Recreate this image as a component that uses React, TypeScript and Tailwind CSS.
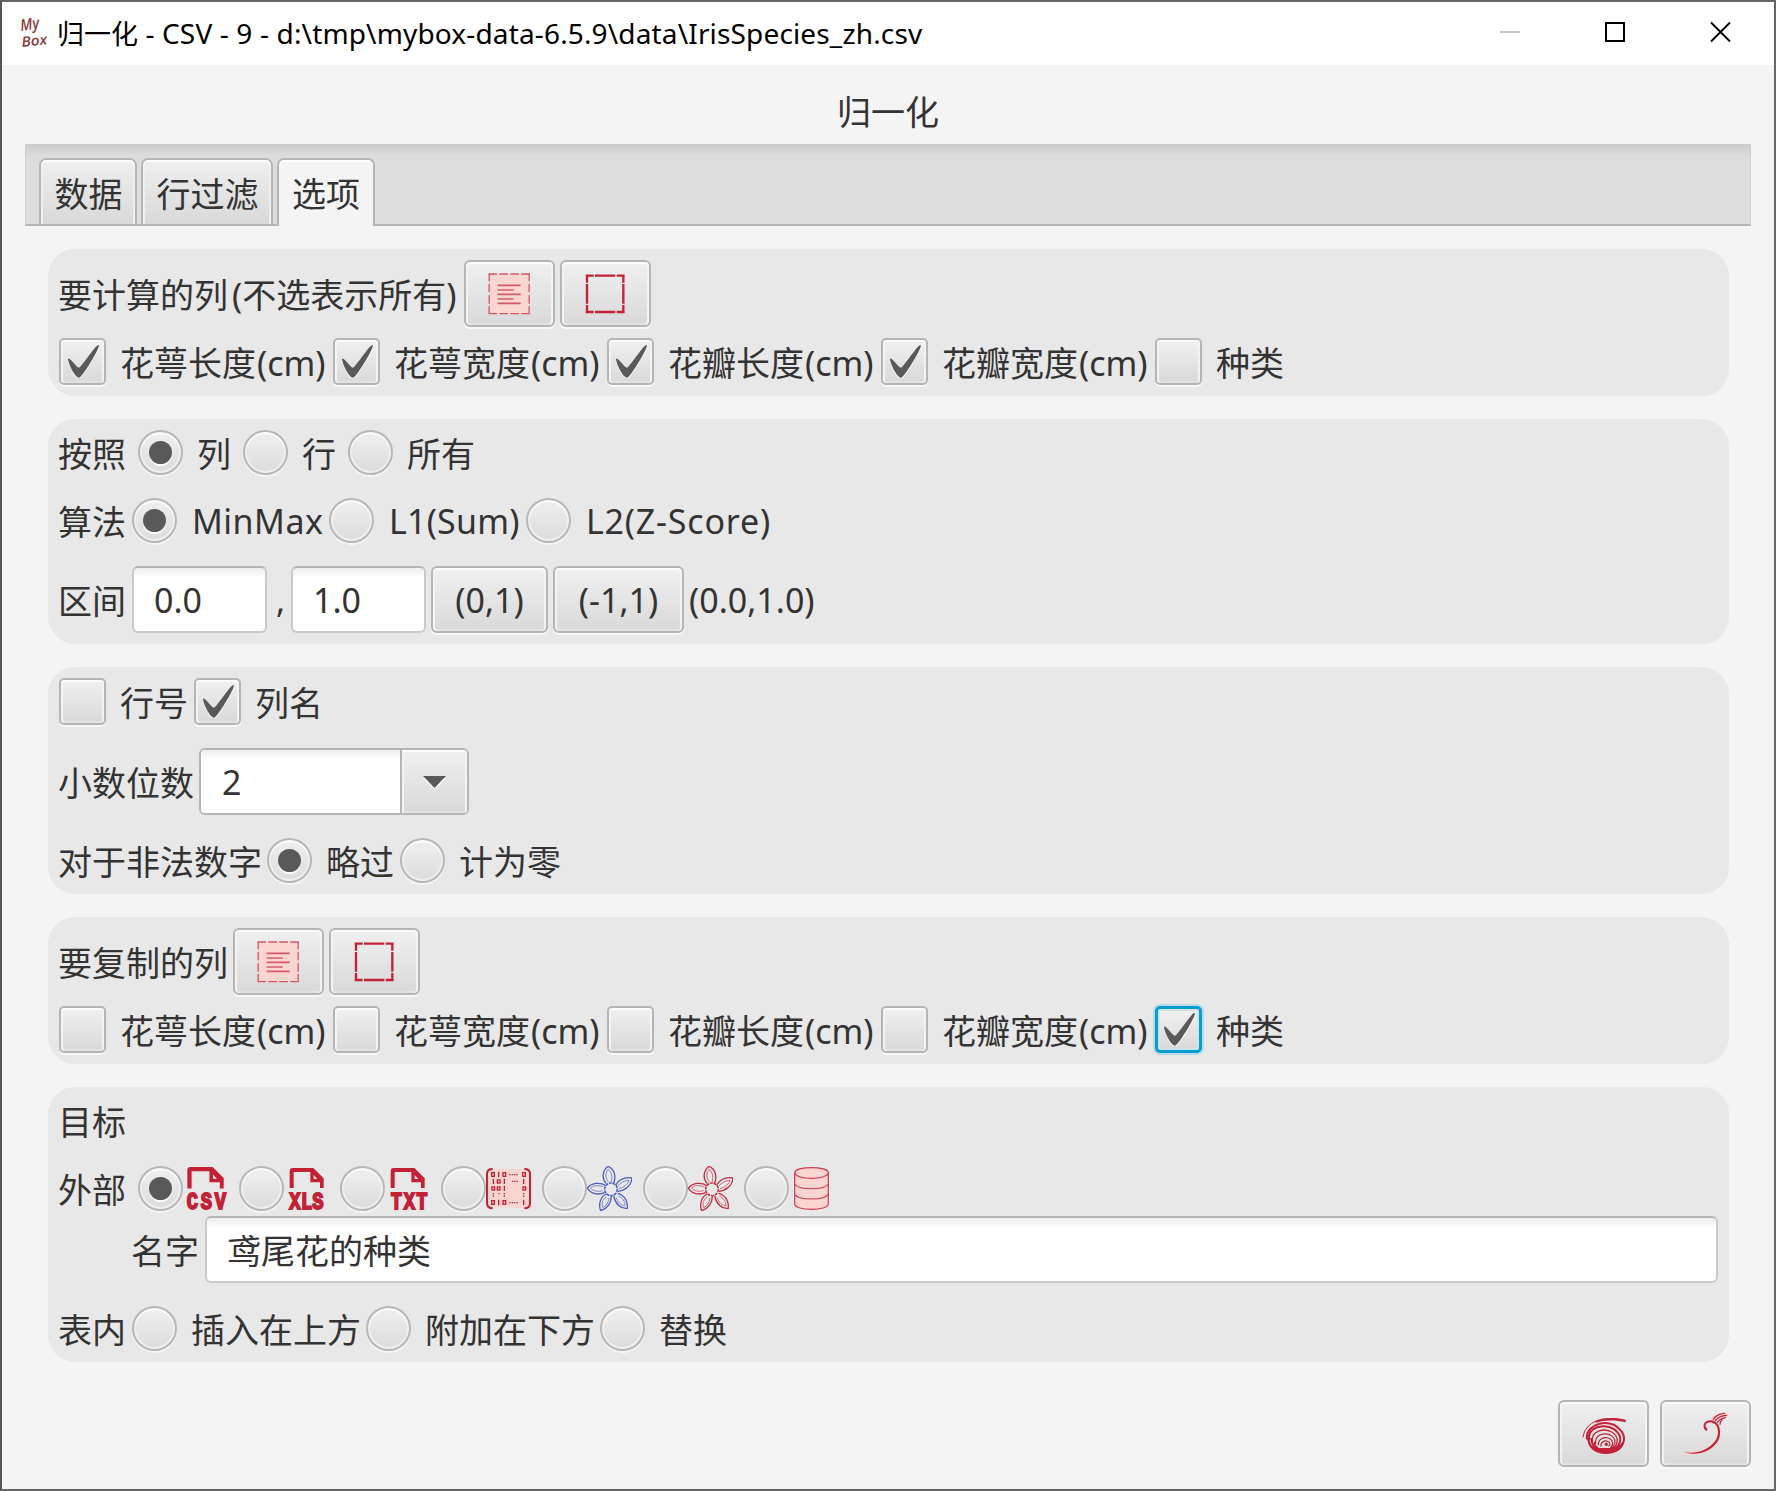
import React from "react";

const FACE =
  "relative shrink-0 border-2 border-[#b5b5b5] bg-linear-to-b from-[#f0f0f0] to-[#d9d9d9] shadow-[0_2px_0_#f8f8f8,inset_0_2px_0_#fcfcfc,inset_2px_0_0_#f3f3f3,inset_-2px_0_0_#f3f3f3,inset_0_-2px_0_#e1e1e1]";

function Mark() {
  return (
    <svg className="h-[33px] w-[31px] shrink-0" viewBox="-0.4 -1 16.5 17.3" preserveAspectRatio="none">
      <path
        fill="#fff"
        transform="translate(0 .7)"
        d="M-0.25,6.083c0.843-0.758,4.583,4.833,5.75,4.833S14.5-1.5,15.917-0.917c1.292,0.532-8.75,17.083-10.5,17.083C3,16.167-1.083,6.833-0.25,6.083z"
      />
      <path
        fill="#595959"
        d="M-0.25,6.083c0.843-0.758,4.583,4.833,5.75,4.833S14.5-1.5,15.917-0.917c1.292,0.532-8.75,17.083-10.5,17.083C3,16.167-1.083,6.833-0.25,6.083z"
      />
    </svg>
  );
}

const FOCUS =
  "relative shrink-0 border-[3px] border-[#039ed3] bg-linear-to-b from-[#f0f0f0] to-[#d9d9d9] shadow-[0_0_0_2px_#b9dbe6,inset_0_0_0_2px_#cfe3ea]";

function Check({ on, focus, w, children }: { on?: boolean; focus?: boolean; w: string; children: React.ReactNode }) {
  return (
    <label className="flex h-[47px] items-center">
      <span className={`${focus ? FOCUS : FACE} flex size-[47px] items-center justify-center rounded-[5px] pl-px`}>
        {on && <Mark />}
      </span>
      <span className={`ml-[14px] pt-[3px] whitespace-nowrap ${w}`}>{children}</span>
    </label>
  );
}

function Dot({ on }: { on?: boolean }) {
  return (
    <span
      className="flex size-[45px] shrink-0 items-center justify-center rounded-full border-2 border-[#b7b7b7] bg-linear-to-b from-[#f0f0f0] to-[#dbdbdb] shadow-[0_2px_0_#f6f6f6,inset_0_2px_1px_#fcfcfc,inset_0_0_0_2px_#efefef]"
    >
      {on && <span className="size-[23px] rounded-full bg-[#595959] shadow-[0_2px_0_#fafafa]" />}
    </span>
  );
}

function Radio({ on, w, children }: { on?: boolean; w: string; children: React.ReactNode }) {
  return (
    <label className="flex h-[45px] items-center">
      <Dot on={on} />
      <span className={`ml-[14px] whitespace-nowrap ${w}`}>{children}</span>
    </label>
  );
}

function Name({ w, children }: { w: string; children: React.ReactNode }) {
  return <span className={`-ml-px flex h-[45px] items-center pt-[3px] whitespace-nowrap ${w}`}>{children}</span>;
}

function Btn({ w, children }: { w: string; children: React.ReactNode }) {
  return <button className={`${FACE} flex h-[67px] items-center justify-center rounded-[6px] ${w}`}>{children}</button>;
}

function Field({ w, children }: { w: string; children: React.ReactNode }) {
  return (
    <div
      className={`flex h-[67px] items-center rounded-[6px] border-2 border-[#cacaca] border-t-[#b5b5b5] bg-white bg-linear-to-b from-[#eeeeee] to-white to-[10px] pl-[20px] whitespace-nowrap ${w}`}
    >
      {children}
    </div>
  );
}

function Panel({ className, children }: { className: string; children: React.ReactNode }) {
  return (
    <section className={`flex w-[1681px] flex-col items-start rounded-[27px] bg-[#e8e8e8] p-[11px] ${className}`}>
      {children}
    </section>
  );
}

const RED = "#c32136";
const PINK = "#fbd6d1";

function SelectAll() {
  return (
    <svg className="mr-px size-[44px]" viewBox="649 119 132 132" fill="none">
      <rect x="656" y="125" width="119" height="119" fill={PINK} />
      <g stroke="#d4576a" strokeWidth="4">
        <path d="M654 125h25M686 125h26M719 125h26M752 125h25M654 244h25M686 244h26M719 244h26M752 244h25" />
        <path d="M655.500 124v23M655.500 154v26M655.500 188v26M655.500 221v23M775.500 124v23M775.500 154v26M775.500 188v26M775.500 221v23" />
      </g>
      <path d="M681 159h69M681 186h69M681 213h69" stroke="#d4576a" strokeWidth="5" />
      <path d="M681 173h48M681 200h48" stroke={RED} strokeWidth="3.4" />
    </svg>
  );
}

function SelectNone() {
  return (
    <svg className="mr-px size-[44px]" viewBox="937 119 132 132" fill="none" stroke={RED}>
      <path
        d="M945 130h24M973 130h61M1038 130h24M945 239h24M973 239h61M1038 239h24M949 128v23M949 155v59M949 218v23M1058 128v23M1058 155v59M1058 218v23"
        strokeWidth="7"
      />
    </svg>
  );
}

function FileIcon({ label, at, big }: { label: string; at: number[]; big?: boolean }) {
  return (
    <svg className="size-[45px] shrink-0 overflow-visible" viewBox="0 0 135 135">
      <g transform={big ? "translate(13 3) scale(1.07 1.07)" : "translate(17 6)"}>
        <path
          fill={RED}
          fillRule="evenodd"
          d="M0 60V9Q0 0 9 0H71L102 31V60H91V43H62V12H12V60ZM72 21V33H83Z"
        />
      </g>
      <g transform="scale(.78 1)">
        <text
          x={at.map((v) => v / 0.78).join(" ")}
          y="128"
          fill={RED}
          stroke={RED}
          strokeWidth="5.500"
          fontFamily="Liberation Mono"
          fontWeight="700"
          fontSize="72"
        >
          {label}
        </text>
      </g>
    </svg>
  );
}

function MatrixIcon() {
  return (
    <svg className="size-[45px] shrink-0" viewBox="138 78 135 135" fill="none" stroke={RED}>
      <rect x="142" y="87" width="128" height="116" fill={PINK} stroke="none" />
      <path d="M158 87Q141 87 141 101V190Q141 205 158 205M253 87Q270 87 270 101V190Q270 205 253 205" strokeWidth="6" />
      <g strokeWidth="4">
        <rect x="155" y="98" width="8" height="11" />
        <path d="M176 95V112" />
        <rect x="189" y="98" width="8" height="11" />
        <rect x="248" y="98" width="8" height="11" />
        <path d="M160 116V132M193 116V132M251 116V132" />
        <rect x="172" y="120" width="8" height="9" />
        <rect x="156" y="141" width="8" height="9" />
        <rect x="172" y="141" width="8" height="9" />
        <path d="M193 137V153" />
        <rect x="249" y="141" width="8" height="9" />
        <rect x="155" y="182" width="8" height="11" />
        <path d="M176 179V196" />
        <rect x="189" y="182" width="8" height="11" />
        <path d="M251 179V196" />
        <path d="M208 104H233M216 124H236M208 188H233" strokeDasharray="4 3" />
        <path d="M160 159V170M193 159V170M251 159V170M177 159V163" strokeDasharray="4 3" />
      </g>
    </svg>
  );
}

function FlowerIcon({ color }: { color: string }) {
  const petals = [
    "M499 131C484 116 487 92 504 79C523 86 530 110 520 131",
    "M527 135C537 119 556 111 576 114C575 136 554 152 534 154",
    "M533 160C551 164 564 182 562 205C543 208 526 192 521 168",
    "M514 169C514 188 503 206 482 212C474 192 482 170 499 162",
    "M494 158C474 166 453 162 442 144C456 128 480 126 498 137",
  ];
  const inner = [
    "M505 126C495 112 496 98 504 88C515 96 518 112 513 127",
    "M534 138C541 128 554 121 567 121C563 134 550 143 537 146",
    "M535 168C546 173 556 184 555 197C544 198 533 187 529 173",
    "M507 174C506 187 498 199 488 203C483 192 488 178 499 170",
    "M488 152C474 156 459 153 451 144C462 135 476 135 490 141",
  ];
  return (
    <svg className="size-[45px] shrink-0" viewBox="441 78 135 135" fill="none" stroke={color}>
      {petals.map((d) => (
        <path key={d} d={d} strokeWidth="3.800" />
      ))}
      {inner.map((d) => (
        <path key={d} d={d} strokeWidth="2.400" strokeOpacity=".85" />
      ))}
      <circle cx="513" cy="148" r="19" strokeWidth="4.500" strokeDasharray="9 2.500" />
    </svg>
  );
}

function DatabaseIcon() {
  return (
    <svg className="size-[45px] shrink-0" viewBox="1047 78 135 135" stroke="#d03b4e" strokeWidth="3.600">
      <path fill={PINK} d="M1064 98C1064 78 1165 78 1165 98V191C1165 214 1064 214 1064 191Z" />
      <path fill="none" d="M1064 98C1068 121 1161 121 1165 98M1064 132C1074 151 1155 151 1165 132M1064 162C1074 182 1155 182 1165 162" />
    </svg>
  );
}

function SpiralIcon() {
  return (
    <svg className="mr-px size-[48px]" viewBox="238 208 144 144" fill="none" stroke={RED} strokeLinecap="butt">
      <path d="M250 290C254 254 290 234 322 234Q350 233 378 241" strokeWidth="3" />
      <path fill={RED} stroke="none" d="M286 243C310 230 348 229 378 237V245C346 237 312 238 290 246Z" />
      <path d="M262 296C254 250 330 232 356 262C388 290 372 334 322 336C286 338 268 318 264 288" strokeWidth="6" />
      <path d="M268 300C262 256 316 248 344 266C372 286 368 326 322 332C290 334 274 310 275 292" strokeWidth="6" />
      <path d="M278 306C272 268 314 262 336 274C362 290 358 322 322 330C300 330 284 318 284 304" strokeWidth="4" />
      <path d="M288 310C284 282 312 276 330 282C352 292 350 316 330 326" strokeWidth="3.500" />
      <path d="M296 314C294 294 314 288 326 292C342 298 342 314 332 322" strokeWidth="3.500" />
      <path d="M304 318C302 304 314 298 324 302C334 306 332 314 326 316" strokeWidth="3.500" />
      <circle cx="320" cy="311" r="5" fill={RED} stroke="none" />
      <path fill={RED} stroke="none" d="M264 300C276 324 296 322 320 322C344 324 362 316 373 298C374 326 346 340 318 339C290 338 268 326 264 300Z" />
    </svg>
  );
}

function VineIcon() {
  return (
    <svg className="size-[48px]" viewBox="544 208 144 144" fill="none" strokeLinecap="round">
      <g stroke={PINK} strokeWidth="13">
        <path d="M616 262C604 244 630 236 646 250C662 268 655 300 632 318C612 334 585 339 556 336" strokeWidth="9" />
        <path d="M640 232Q654 220 676 222" />
      </g>
      <path
        fill={RED}
        d="M616 270C604 262 606 240 628 239C650 239 660 258 658 280C656 306 634 328 600 337C584 341 566 340 550 333C566 337 584 337 600 332C630 321 650 302 652 278C653 258 644 246 628 245C614 246 610 258 620 264Q622 270 616 270Z"
      />
      <path stroke={RED} strokeWidth="4" d="M638 236Q648 220 671 218M644 240Q654 226 678 224M650 245Q658 234 674 231M658 251Q658 242 664 238" />
    </svg>
  );
}

const COLS = ["花萼长度", "花萼宽度", "花瓣长度", "花瓣宽度"];

function Columns({ on, last }: { on: boolean; last: boolean }) {
  return (
    <div className="mt-[11px] flex h-[47px] items-center gap-[5px]">
      {COLS.map((c) => (
        <Check key={c} on={on} w="w-[208px]">
          {c}
          <span className="ml-px">(cm)</span>
        </Check>
      ))}
      <Check on={last} focus={last} w="">
        种类
      </Check>
    </div>
  );
}

export default function App() {
  return (
    <div className="flex h-[1491px] w-[1776px] flex-col overflow-hidden border-2 border-[#666666] border-l-[#555555] bg-[#f4f4f4] font-['Noto_Sans','Noto_Sans_CJK_SC',sans-serif] text-[34px] leading-[45px] text-[#333333]">
      <header className="flex h-[63px] shrink-0 items-center bg-white text-black">
        <svg className="ml-[17px] h-[34px] w-[34px] shrink-0 overflow-visible" viewBox="0 0 34 34" fill="#8c3d3d">
          <g fontFamily="Open Sans" fontStyle="italic" fontWeight="600">
            <text transform="rotate(-8 2 14)" x="2" y="14" fontSize="16" textLength="19" lengthAdjust="spacingAndGlyphs">My</text>
            <text transform="rotate(-7 4 30)" x="3" y="30" fontSize="14" textLength="26" lengthAdjust="spacingAndGlyphs">Box</text>
          </g>
        </svg>
        <span className="mb-px ml-[4px] w-[870px] text-[27px] whitespace-nowrap">
          归一化<span className="text-[28px] tracking-[0.15px]"> - CSV - 9 - d:\tmp\mybox-data-6.5.9\data\IrisSpecies_zh.csv</span>
        </span>
        <svg className="mr-[41px] mb-[3px] ml-auto h-[22px] w-[234px] shrink-0" viewBox="0 0 234 22" fill="none">
          <path d="M1 11h20" stroke="#c8c8c8" strokeWidth="2" />
          <rect x="107" y="2" width="18" height="18" stroke="#000" strokeWidth="2" />
          <path d="M212 1.500l19 19M231 1.500l-19 19" stroke="#000" strokeWidth="1.800" />
        </svg>
      </header>

      <main className="flex flex-1 flex-col pl-[23px]">
        <h1 className="flex h-[79px] w-[1726px] shrink-0 items-center justify-center pt-[15px]">归一化</h1>

        <nav className="flex h-[82px] w-[1726px] shrink-0 items-end gap-[4px] border-x border-b-2 border-x-[#cfcfcf] border-b-[#b5b5b5] bg-linear-to-b from-[#cbcbcb] to-[#dddddd] to-[12px] pl-[13px]">
          {[
            ["数据", "w-[98px] pl-px"],
            ["行过滤", "w-[132px] pl-px"],
          ].map(([t, w]) => (
            <div
              key={t}
              className={`flex h-[66px] items-center justify-center rounded-t-[7px] border-2 border-b-0 border-[#b5b5b5] bg-linear-to-b from-[#efefef] to-[#d9d9d9] pt-[5px] whitespace-nowrap shadow-[inset_0_2px_0_#fcfcfc,inset_2px_0_0_#efefef,inset_-2px_0_0_#efefef] ${w}`}
            >
              {t}
            </div>
          ))}
          <div className="-mb-[2px] flex h-[68px] w-[98px] items-center justify-center rounded-t-[7px] border-2 border-b-0 border-[#b5b5b5] bg-[#f4f4f4] pt-[3px] shadow-[inset_0_2px_0_#ffffff]">
            选项
          </div>
        </nav>

        <div className="flex flex-col gap-[23px] pt-[23px] pl-[23px]">
          <Panel className="h-[147px]">
            <div className="flex items-center gap-[5px]">
              <Name w="w-[401px]">
                要计算的列<span className="ml-[4px]">(</span>不选表示所有)
              </Name>
              <Btn w="w-[91px]"><SelectAll /></Btn>
              <Btn w="w-[91px]"><SelectNone /></Btn>
            </div>
            <Columns on last={false} />
          </Panel>

          <Panel className="h-[225px] gap-[23px]">
            <div className="flex items-center">
              <Name w="w-[80px]">按照</Name>
              <div className="flex gap-[12px]">
                <Radio on w="w-[34px] pt-[3px]">列</Radio>
                <Radio w="w-[34px] pt-[3px]">行</Radio>
                <Radio w="pt-[3px]">所有</Radio>
              </div>
            </div>
            <div className="flex items-center">
              <Name w="w-[74px]">算法</Name>
              <Radio on w="w-[138px] tracking-[0.5px] pl-px pt-[2px]">MinMax</Radio>
              <Radio w="w-[138px] tracking-[0.2px] pl-px pt-[2px]">L1(Sum)</Radio>
              <Radio w="tracking-[0.8px] pl-px pt-[2px]">L2(Z-Score)</Radio>
            </div>
            <div className="flex items-center">
              <Name w="w-[74px]">区间</Name>
              <Field w="w-[135px] pt-[2px]">0.0</Field>
              <span className="w-[24px] pt-[2px] pl-[9px]">,</span>
              <Field w="w-[135px] pt-[2px]">1.0</Field>
              <div className="ml-[5px] flex items-center gap-[5px]">
                <Btn w="w-[117px] pt-[2px]">(0,1)</Btn>
                <Btn w="w-[131px] pt-[2px]">(-1,1)</Btn>
                <span className="pt-[2px]">(0.0,1.0)</span>
              </div>
            </div>
          </Panel>

          <Panel className="h-[227px] gap-[23px]">
            <div className="flex items-center gap-[5px]">
              <Check w="w-[69px]">行号</Check>
              <Check on w="">列名</Check>
            </div>
            <div className="flex items-center">
              <Name w="w-[141px]">小数位数</Name>
              <div className="flex h-[67px] w-[270px] overflow-hidden rounded-[6px] border-2 border-[#b5b5b5] bg-white">
                <div className="flex flex-1 items-center bg-linear-to-b from-[#eeeeee] to-white to-[10px] pt-[2px] pl-[21px]">2</div>
                <div className="flex w-[67px] items-center justify-center border-l-2 border-[#b5b5b5] bg-linear-to-b from-[#f0f0f0] to-[#d9d9d9] pt-[2px] shadow-[inset_0_2px_0_#fcfcfc,inset_2px_0_0_#f3f3f3,inset_-2px_0_0_#f3f3f3,inset_0_-2px_0_#e1e1e1]">
                  <svg className="h-[14px] w-[23px]" viewBox="0 0 23 14">
                    <path d="M0 2h23L11.500 14z" fill="#fff" />
                    <path d="M0 0h23L11.500 12z" fill="#595959" />
                  </svg>
                </div>
              </div>
            </div>
            <div className="flex items-center">
              <Name w="w-[209px]">对于非法数字</Name>
              <div className="flex gap-[5px]">
                <Radio on w="w-[69px] pt-[3px]">略过</Radio>
                <Radio w="pt-[3px]">计为零</Radio>
              </div>
            </div>
          </Panel>

          <Panel className="h-[147px]">
            <div className="flex items-center gap-[5px]">
              <Name w="w-[170px]">要复制的列</Name>
              <Btn w="w-[91px]"><SelectAll /></Btn>
              <Btn w="w-[91px]"><SelectNone /></Btn>
            </div>
            <Columns on={false} last />
          </Panel>

          <Panel className="h-[275px]">
            <Name w="">目标</Name>
            <div className="mt-[23px] flex items-center">
              <Name w="w-[80px]">外部</Name>
              <div className="flex gap-[11px]">
                <span className="flex"><Dot on /><FileIcon label="CSV" at={[11, 53, 95]} big /></span>
                <span className="flex"><Dot /><FileIcon label="XLS" at={[16, 51, 85]} /></span>
                <span className="flex"><Dot /><FileIcon label="TXT" at={[17, 56, 94]} /></span>
                <span className="flex"><Dot /><MatrixIcon /></span>
                <span className="flex"><Dot /><FlowerIcon color="#4a5cc4" /></span>
                <span className="flex"><Dot /><FlowerIcon color="#c4293c" /></span>
                <span className="flex"><Dot /><DatabaseIcon /></span>
              </div>
            </div>
            <div className="mt-[5px] flex items-center pl-[73px]">
              <Name w="w-[74px]">名字</Name>
              <Field w="w-[1513px] pt-[3px]">鸢尾花的种类</Field>
            </div>
            <div className="mt-[23px] flex items-center">
              <Name w="w-[74px]">表内</Name>
              <div className="flex gap-[5px]">
                <Radio w="w-[170px] pt-[3px]">插入在上方</Radio>
                <Radio w="w-[170px] pt-[3px]">附加在下方</Radio>
                <Radio w="pt-[3px]">替换</Radio>
              </div>
            </div>
          </Panel>
        </div>

        <footer className="mt-[38px] flex w-[1726px] justify-end gap-[11px]">
          <Btn w="w-[91px]"><SpiralIcon /></Btn>
          <Btn w="w-[91px]"><VineIcon /></Btn>
        </footer>
      </main>
    </div>
  );
}
